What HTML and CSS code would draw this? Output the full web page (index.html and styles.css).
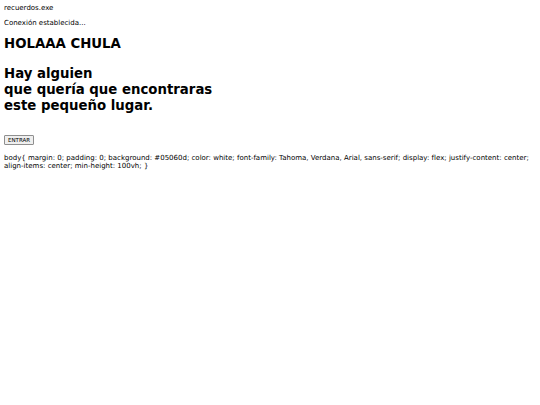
FILE: index.html
```html
<!DOCTYPE html>
<html lang="es">
<head>
<meta charset="utf-8">
<title>recuerdos.exe</title>
<link rel="stylesheet" href="styles.css">
</head>
<body>
<div class="title">recuerdos.exe</div>
<p class="status">Conexión establecida...</p>
<h1 class="hello">HOLAAA CHULA</h1>
<h2 class="message">Hay alguien<br>que quería que encontraras<br>este pequeño lugar.</h2>
<button class="enter">ENTRAR</button>
<p class="code">body{ margin: 0; padding: 0; background: #05060d; color: white; font-family: Tahoma, Verdana, Arial, sans-serif; display: flex; justify-content: center; align-items: center; min-height: 100vh; }</p>
</body>
</html>
```
FILE: styles.css
```css
html, body {
  background: #ffffff;
}
body {
  margin: 4px;
  font-family: "DejaVu Sans", Verdana, sans-serif;
  font-size: 7px;
  color: #000;
}
.title {
  line-height: 8px;
}
.status {
  margin: 7px 0;
  line-height: 8px;
}
.hello {
  font-size: 13.3px;
  line-height: 16px;
  margin: 9px 0;
  font-weight: bold;
}
.message {
  font-size: 13.3px;
  line-height: 16px;
  margin: 14px 0 0;
  font-weight: bold;
}
.enter {
  display: block;
  margin-top: 21px;
  font-family: "DejaVu Sans", Verdana, sans-serif;
  font-size: 5.5px;
  padding: 1px 3px;
  background: #efefef;
  border: 1px solid #8f8f8f;
  border-radius: 1px;
  color: #000;
}
.code {
  margin: 10px 0 0;
  line-height: 7.5px;
}
```
